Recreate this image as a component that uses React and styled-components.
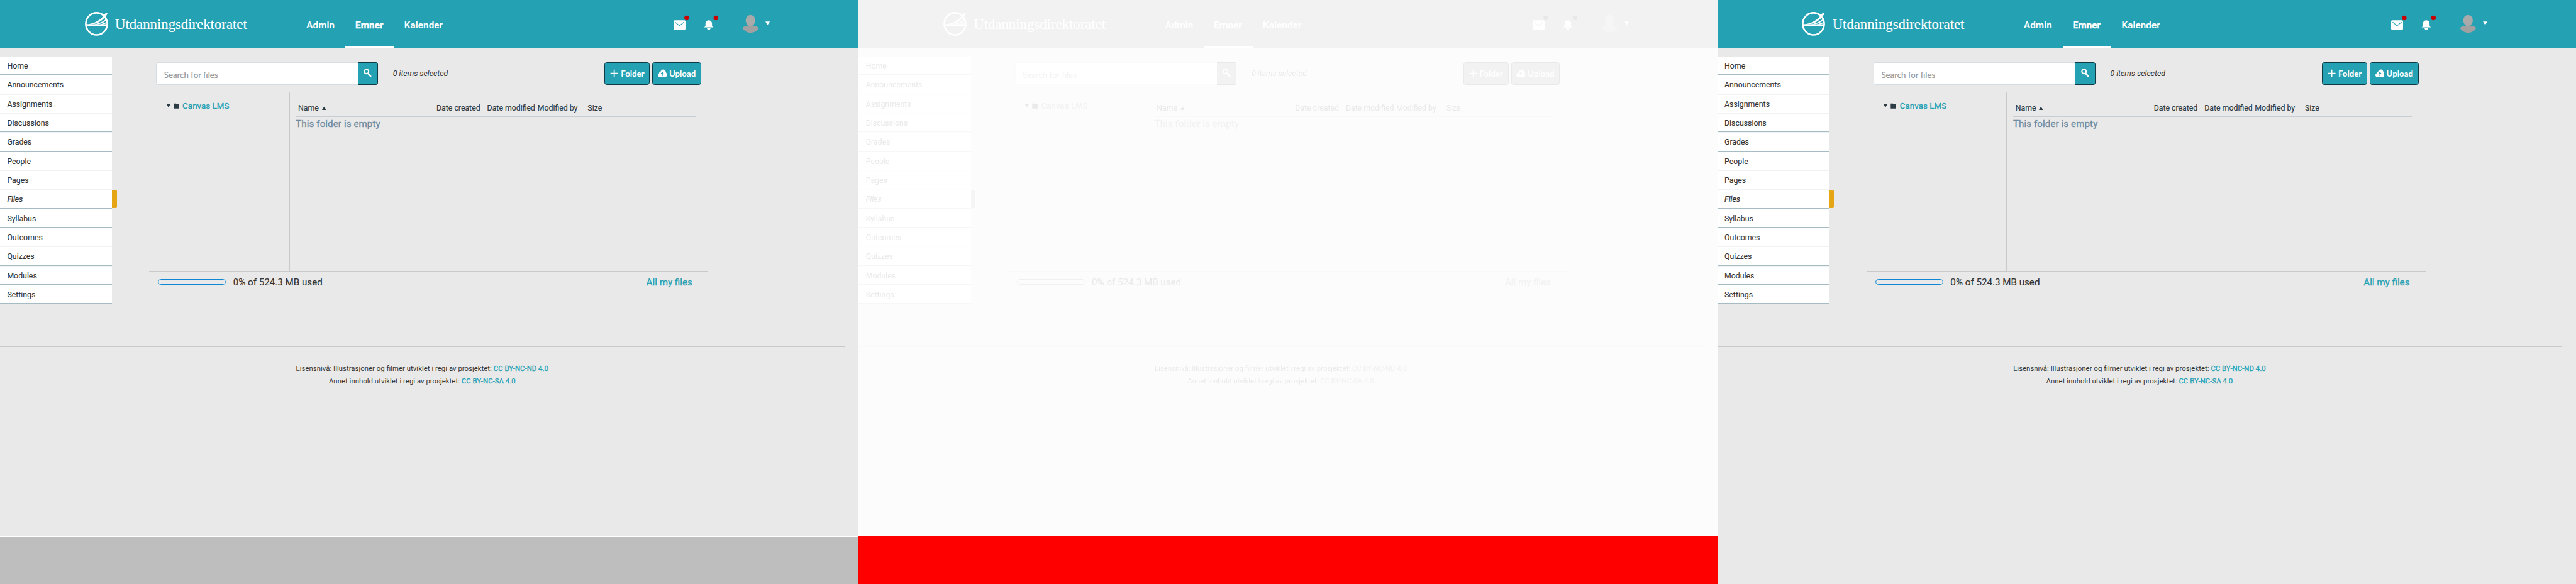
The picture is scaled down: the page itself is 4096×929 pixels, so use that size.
import React from "react";
import styled, { createGlobalStyle, css } from "styled-components";

const Global = createGlobalStyle`
  * { box-sizing: border-box; }
  body { margin: 0; background: #fff; font-family: Roboto, "Liberation Sans", sans-serif; color: #333; }
`;
const Sheet = styled.main`
  display: flex;
  width: 4320px;
  height: 980px;
  zoom: 0.948148;
  overflow: hidden;
`;
const Column = styled.section`
  width: 1440px;
  height: 980px;
  display: flex;
  flex-direction: column;
  background: ${(p) => p.$fill};
`;
const Screen = styled.div`
  width: 1440px;
  height: ${(p) => (p.$tall ? 980 : 900)}px;
  flex: none;
  background: #e9e9e9;
  ${(p) => p.$faded && css`filter: grayscale(1); opacity: 0.1;`}
`;
const Backing = styled.div`
  background: #fff;
  height: ${(p) => p.$h}px;
  flex: none;
`;
const Header = styled.header`
  height: 80px;
  background: #25a1b4;
  display: flex;
  padding-left: 142px;
  color: #fff;
`;
const Brand = styled.a`
  display: flex;
  width: 355px;
  padding-top: 20px;
  svg { display: block; flex: none; }
`;
const BrandName = styled.span`
  font: 24px/30px "Liberation Serif", serif;
  margin: 6px 0 0 11px;
  white-space: nowrap;
  -webkit-text-stroke: 0.2px #fff;
`;
const Tab = styled.a`
  height: 80px;
  width: ${(p) => p.$w}px;
  padding: 33px 0 0 17px;
  font-size: 16px;
  line-height: 20px;
  font-weight: 500;
  letter-spacing: 0.15px;
  white-space: nowrap;
  border-bottom: 4px solid ${(p) => (p.$active ? "#fff" : "transparent")};
  -webkit-text-stroke: ${(p) => (p.$active ? 0.6 : 0.2)}px #fff;
`;
const Tabs = styled.nav`
  display: flex;
  width: 633px;
`;
const Tools = styled.div`
  display: flex;
  svg { display: block; }
`;
const Body = styled.div`
  display: flex;
  height: 486px;
`;
const Side = styled.nav`
  width: 188px;
  margin-top: 15px;
`;
const SideItem = styled.a`
  display: block;
  position: relative;
  height: 31px;
  margin-bottom: 1px;
  box-shadow: 0 1px 0 #f0f4f5;
  padding-left: 12px;
  background: #fff;
  border-bottom: 1px solid #a5bcc4;
  font-size: 13px;
  line-height: 32px;
  color: #333;
  font-style: ${(p) => (p.$active ? "italic" : "normal")};
  -webkit-text-stroke: ${(p) => (p.$active ? 0.3 : 0.1)}px #333;
  &:last-child { box-shadow: none; margin-bottom: 0; }
  ${(p) => p.$active && css`
    &::after {
      content: "";
      position: absolute;
      left: 188px;
      top: 0;
      width: 8px;
      height: 30px;
      background: #e5a514;
      border-radius: 0 2px 2px 0;
    }
  `}
`;
const Content = styled.div`
  width: 938px;
  margin-left: 62px;
`;
const Toolbar = styled.div`
  margin: 0 12px;
  height: 75px;
  padding-top: 24px;
  border-bottom: 1px solid #c7c9cb;
  display: flex;
`;
const Field = styled.div`
  width: 339px;
  height: 38px;
  border: 1px solid #d5dde2;
  border-right: 0;
  border-radius: 4px 0 0 4px;
  background: #fff;
  padding: 1px 0 0 12px;
  font: 14px/38px Lato, sans-serif;
  color: #999;
  -webkit-text-stroke: 0.2px #999;
`;
const Button = styled.button`
  height: 38px;
  width: ${(p) => p.$w}px;
  margin: 0 0 0 ${(p) => p.$gap || 0}px;
  padding: 0;
  border: 1px solid #0f3a46;
  border-radius: 4px;
  background: #25a1b4;
  color: #fff;
  font: 700 14px Lato, sans-serif;
  display: flex;
  align-items: center;
  justify-content: center;
  gap: 4px;
  white-space: nowrap;
  ${(p) => p.$joined && css`border-left: 0; border-radius: 0 4px 4px 0;`}
`;
const Selected = styled.span`
  width: 355px;
  margin-left: 25px;
  font-size: 13px;
  line-height: 39px;
  font-style: italic;
`;
const Panes = styled.div`
  display: flex;
  height: 300px;
  margin: 0 12px;
`;
const Tree = styled.div`
  width: 224px;
  padding: 14px 0 0 16px;
  border-right: 1px solid #c7c9cb;
  display: flex;
  align-items: flex-start;
  color: #25a1b4;
  font-size: 14px;
  line-height: 18px;
  letter-spacing: 0.1px;
  -webkit-text-stroke: 0.35px #25a1b4;
  svg { display: block; }
`;
const List = styled.div`
  width: 670px;
  margin-left: 10px;
`;
const HeadRow = styled.div`
  display: flex;
  height: 41px;
  padding: 20px 0 0 4px;
  border-bottom: 1px solid #c7cdd1;
  font-size: 13px;
  line-height: 14px;
  color: #2d3b45;
  white-space: nowrap;
  -webkit-text-stroke: 0.15px #2d3b45;
`;
const HeadCell = styled.span`
  width: ${(p) => p.$w}px;
  display: flex;
  gap: 5px;
`;
const Empty = styled.div`
  font-size: 16px;
  line-height: 24px;
  letter-spacing: 0.08px;
  color: #6f8ba1;
  -webkit-text-stroke: 0.35px #6f8ba1;
`;
const Usage = styled.div`
  border-top: 1px solid #c7c9cb;
  height: 50px;
  padding: 6px 27px 0 15px;
  display: flex;
  font-size: 16px;
  line-height: 24px;
  -webkit-text-stroke: 0.15px #333;
`;
const Meter = styled.span`
  width: 114px;
  height: 10px;
  margin: 6px 12px 0 0;
  border: 1px solid #0f87d3;
  border-radius: 5px;
`;
const Link = styled.a`
  color: #25a1b4;
  -webkit-text-stroke: 0.35px #25a1b4;
  ${(p) => p.$end && css`margin-left: auto;`}
`;
const Footer = styled.footer`
  width: 1416px;
  margin-top: 15px;
  border-top: 1px solid #c7c9cb;
  padding-top: 25px;
  text-align: center;
  font-size: 12px;
  letter-spacing: 0.03px;
  line-height: 22px;
`;

const items = ["Home", "Announcements", "Assignments", "Discussions", "Grades", "People", "Pages", "Files", "Syllabus", "Outcomes", "Quizzes", "Modules", "Settings"];

const Logo = () => (
  <svg width="40" height="40" viewBox="0 0 40 40" fill="none" stroke="#fff">
    <ellipse cx="19.500" cy="20" rx="18" ry="18.500" strokeWidth="2.800" />
    <path d="M2 22.300h35" strokeWidth="3.200" />
    <g fill="#fff" stroke="none">
      <path d="M3 20.800C16 19.500 27 14 35.500 .8l2.500 2.200C32 13 22 20.800 10 20.800z" />
      <path d="M15 20.800C24 19 31 16 35.500 11.500l.8 2.500C32 17.500 27 20 21 20.800z" />
      <path d="M25 20.800C30 19.800 34 18.300 37 16.200v2C35 19.500 33 20.300 30.500 20.800z" />
    </g>
  </svg>
);
const Status = () => (
  <svg width="170" height="80" viewBox="0 0 170 80">
    <rect x="0" y="34" width="20" height="16" rx="2" fill="#fff" />
    <path d="M2.500 37l7.500 6.200 7.500-6.200" fill="none" stroke="#25a1b4" strokeWidth="1.200" />
    <circle cx="22" cy="30" r="4" fill="#c90000" />
    <path d="M59 34c4 0 5.500 3 5.500 6v4l2.500 2H51l2.500-2v-4c0-3 1.500-6 5.500-6zM56 47h6c0 4-6 4-6 0z" fill="#fff" />
    <circle cx="71" cy="30" r="4" fill="#c90000" />
    <path d="M115.700 47c3-4 7.500-3 10-4.500h7c2.500 1.500 7 .5 10 4.500-2.500 5-8 8-13.500 8s-11-3-13.500-8z" fill="#a1a1a1" />
    <ellipse cx="129" cy="34.300" rx="8" ry="9.300" fill="#aaa" />
    <path d="M154 36h7.500l-3.750 6z" fill="#fff" />
  </svg>
);

const Page = ({ tall, faded }) => (
  <Screen $tall={tall} $faded={faded}>
    <Header>
      <Brand><Logo /><BrandName>Utdanningsdirektoratet</BrandName></Brand>
      <Tabs><Tab $w={82}>Admin</Tab><Tab $w={82} $active>Emner</Tab><Tab $w={100}>Kalender</Tab></Tabs>
      <Tools><Status /></Tools>
    </Header>
    <Body>
      <Side>{items.map((t) => <SideItem key={t} $active={t === "Files"}>{t}</SideItem>)}</Side>
      <Content>
        <Toolbar>
          <Field>Search for files</Field>
          <Button $w={33} $joined aria-label="Search">
            <svg width="14" height="15" viewBox="0 0 14 15" fill="none" stroke="#fff"><circle cx="5" cy="5" r="3.600" strokeWidth="2.200" /><path d="M8 8.500l3.800 4.300" strokeWidth="2.800" strokeLinecap="round" /></svg>
          </Button>
          <Selected>0 items selected</Selected>
          <Button $w={76}>
            <svg width="14" height="14" viewBox="0 0 14 14"><path d="M7 .7v12.600M.7 7h12.600" stroke="#fff" strokeWidth="1.800" /></svg>Folder
          </Button>
          <Button $w={82} $gap={4}>
            <svg width="15" height="14" viewBox="0 0 15 14"><path d="M3.500 13.500C1.300 13.500 0 12 0 10c0-1.700 1-2.800 2.200-3.200C2.200 5 3.200 4 4.700 4 5.300 1.800 7 .5 9 .5c2.600 0 4.300 2 4.300 4.500C14.500 6 15 7.800 15 9.500c0 2.500-1.200 4-3 4z" fill="#fff" /><path d="M7.500 11.800V5.500M5 8l2.500-2.600L10 8" fill="none" stroke="#25a1b4" strokeWidth="1.200" /></svg>Upload
          </Button>
        </Toolbar>
        <Panes>
          <Tree>
            <svg width="28" height="18" viewBox="0 0 28 18" fill="#2d3b45" stroke="none"><path d="M.7 6h6.800l-3.400 5.500zM13 5h4l1 1.300h4v7.200h-9z" /></svg>
            Canvas LMS
          </Tree>
          <List>
            <HeadRow>
              <HeadCell $w={232}>Name <svg width="8" height="14"><path d="M3.500 4l3.500 5.500H0z" fill="#2d3b45" /></svg></HeadCell>
              <HeadCell $w={85}>Date created</HeadCell>
              <HeadCell $w={84.5}>Date modified</HeadCell>
              <HeadCell $w={84}>Modified by</HeadCell>
              <HeadCell $w={60}>Size</HeadCell>
            </HeadRow>
            <Empty>This folder is empty</Empty>
          </List>
        </Panes>
        <Usage><Meter />0% of 524.3 MB used<Link $end>All my files</Link></Usage>
      </Content>
    </Body>
    <Footer>
      <div>Lisensnivå: Illustrasjoner og filmer utviklet i regi av prosjektet: <Link>CC BY-NC-ND 4.0</Link></div>
      <div>Annet innhold utviklet i regi av prosjektet: <Link>CC BY-NC-SA 4.0</Link></div>
    </Footer>
  </Screen>
);

export default function App() {
  return (
    <>
      <Global />
      <Sheet>
        <Column $fill="#bebebe"><Backing $h={901}><Page /></Backing></Column>
        <Column $fill="#f00"><Backing $h={900}><Page faded /></Backing></Column>
        <Column $fill="#e9e9e9"><Page tall /></Column>
      </Sheet>
    </>
  );
}
